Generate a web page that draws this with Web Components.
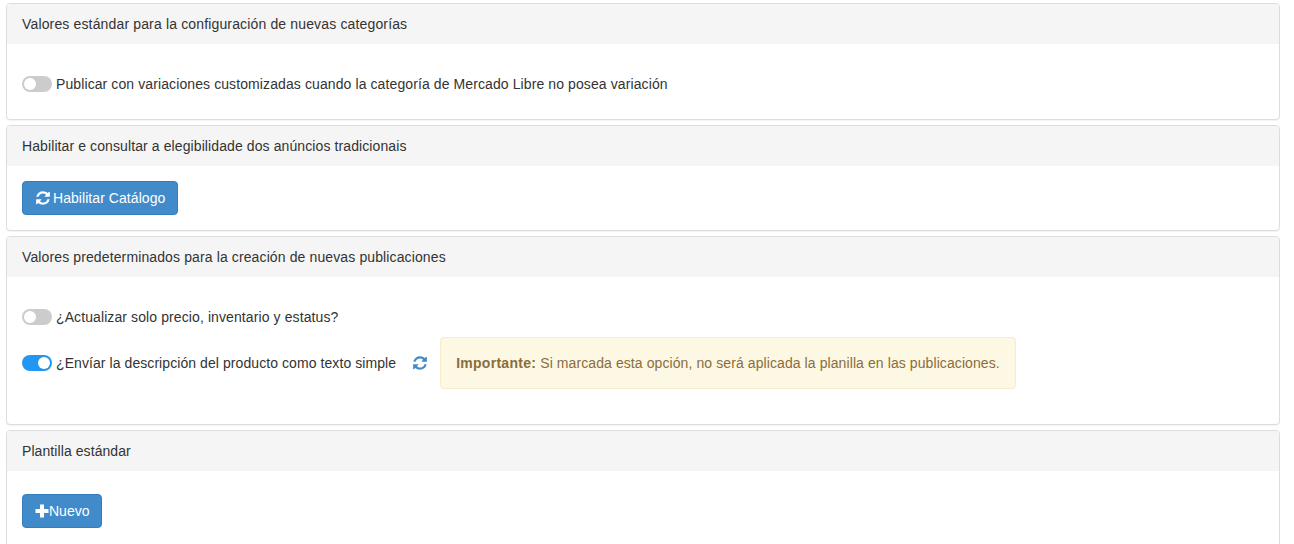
<!DOCTYPE html>
<html lang="es">
<head>
<meta charset="utf-8">
<title>Configuración</title>
<style>
  html, body { height: 100%; }
  body {
    margin: 0;
    padding: 3px 14px 0 6px;
    box-sizing: border-box;
    overflow: hidden;
    background: #fff;
    color: #333;
    font: 14px/20px "Liberation Sans", Arial, sans-serif;
    letter-spacing: .1px;
  }
</style>
</head>
<body>
  <ml-panel heading="Valores estándar para la configuración de nuevas categorías" style="--heading-track: .15px">
    <ml-row style="margin: 15px 0 10px">
      <ml-switch>Publicar con variaciones customizadas cuando la categoría de Mercado Libre no posea variación</ml-switch>
    </ml-row>
  </ml-panel>

  <ml-panel heading="Habilitar e consultar a elegibilidade dos anúncios tradicionais">
    <ml-button icon="refresh" gap="2" style="letter-spacing: .06px">Habilitar Catálogo</ml-button>
  </ml-panel>

  <ml-panel heading="Valores predeterminados para la creación de nuevas publicaciones" style="--heading-track: .12px">
    <ml-row style="margin: 15px 0 10px">
      <ml-switch>¿Actualizar solo precio, inventario y estatus?</ml-switch>
    </ml-row>
    <ml-row style="margin-bottom: 20px">
      <ml-switch checked style="letter-spacing: .075px">¿Envíar la descripción del producto como texto simple</ml-switch>
      <ml-icon name="refresh" style="margin: 0 12px 0 16px; color: #428bca"></ml-icon>
      <ml-alert style="letter-spacing: .09px"><b style="letter-spacing: .28px">Importante:</b> Si marcada esta opción, no será aplicada la planilla en las publicaciones.</ml-alert>
    </ml-row>
  </ml-panel>

  <ml-panel heading="Plantilla estándar" style="--heading-track: .08px">
    <ml-row style="margin: 8px 0 15px">
      <ml-button icon="plus" style="letter-spacing: 0">Nuevo</ml-button>
    </ml-row>
  </ml-panel>

<script>
const ICONS = {
  refresh: `<svg viewBox="0 0 1792 1792" width="16" height="16" fill="currentColor"><path d="M1639 1056q0 5-1 7-64 268-268 434.5t-478 166.5q-146 0-282.5-55t-243.5-157l-129 129q-19 19-45 19t-45-19-19-45v-448q0-26 19-45t45-19h448q26 0 45 19t19 45-19 45l-137 137q71 66 161 102t187 36q134 0 250-65t186-179q11-17 53-117 8-23 30-23h192q13 0 22.5 9.5t9.5 22.5zm25-800v448q0 26-19 45t-45 19h-448q-26 0-45-19t-19-45 19-45l138-138q-148-137-349-137-134 0-250 65t-186 179q-11 17-53 117-8 23-30 23h-199q-13 0-22.5-9.5t-9.5-22.5v-7q65-268 270-434.5t480-166.5q146 0 284 55.5t245 156.5l130-129q19-19 45-19t45 19 19 45z"/></svg>`,
  plus: `<svg viewBox="0 0 14 14" width="14" height="14" fill="currentColor"><path d="M5 .5h4v4.5h4.5v4H9v4.500H5V9H.5V5H5z"/></svg>`
}

customElements.define('ml-panel', class extends HTMLElement {
  constructor() {
    super()
    this.attachShadow({mode: "open"})
    this.shadowRoot.innerHTML = `
      <style>
        :host {
          display: block;
          margin-bottom: 5px;
          background: #fff;
          border: 1px solid #ddd;
          border-radius: 4px;
          box-shadow: 0 1px 1px rgba(0,0,0,.05);
        }
        header {
          padding: 10px 15px;
          background: #f5f5f5;
          border-radius: 3px 3px 0 0;
          letter-spacing: var(--heading-track, .1px);
        }
        section {
          padding: 15px;
        }
      </style>
      <header></header>
      <section><slot></slot></section>
    `
    this.shadowRoot.querySelector("header").textContent = this.getAttribute('heading')
  }
})

customElements.define('ml-row', class extends HTMLElement {
  constructor() {
    super()
    this.attachShadow({mode: "open"})
    this.shadowRoot.innerHTML = `
      <style>
        :host {
          display: flex;
          align-items: center;
        }
      </style>
      <slot></slot>
    `
  }
})

customElements.define('ml-switch', class extends HTMLElement {
  constructor() {
    super()
    this.attachShadow({mode: "open"})
    this.shadowRoot.innerHTML = `
      <style>
        :host {
          display: inline-flex;
          align-items: center;
          gap: 4px;
        }
        .track {
          box-sizing: border-box;
          width: 30px;
          height: 16px;
          padding: 2px;
          border-radius: 8px;
          background: #ccc;
          display: flex;
        }
        .knob {
          width: 12px;
          height: 12px;
          border-radius: 50%;
          background: #fff;
        }
        :host([checked]) .track {
          background: #2196f3;
          justify-content: flex-end;
        }
      </style>
      <span class="track"><span class="knob"></span></span>
      <span><slot></slot></span>
    `
  }
})

customElements.define('ml-icon', class extends HTMLElement {
  constructor() {
    super()
    this.attachShadow({mode: "open"})
    this.shadowRoot.innerHTML = `
      <style>
        :host {
          display: inline-flex;
        }
      </style>
      ${ICONS[this.getAttribute('name')]}
    `
  }
})

customElements.define('ml-button', class extends HTMLElement {
  constructor() {
    super()
    this.attachShadow({mode: "open"})
    this.shadowRoot.innerHTML = `
      <style>
        :host {
          display: inline-flex;
          align-items: center;
          box-sizing: border-box;
          height: 34px;
          padding: 6px 12px;
          color: #fff;
          background: #428bca;
          border: 1px solid #357ebd;
          border-radius: 4px;
        }
        ml-icon {
          margin-right: ${this.getAttribute('gap') ?? 0}px;
        }
      </style>
      <ml-icon name="${this.getAttribute('icon')}"></ml-icon>
      <slot></slot>
    `
  }
})

customElements.define('ml-alert', class extends HTMLElement {
  constructor() {
    super()
    this.attachShadow({mode: "open"})
    this.shadowRoot.innerHTML = `
      <style>
        :host {
          display: block;
          padding: 15px;
          color: #8a6d3b;
          background: #fcf8e3;
          border: 1px solid #faebcc;
          border-radius: 4px;
        }
      </style>
      <slot></slot>
    `
  }
})
</script>
</body>
</html>
